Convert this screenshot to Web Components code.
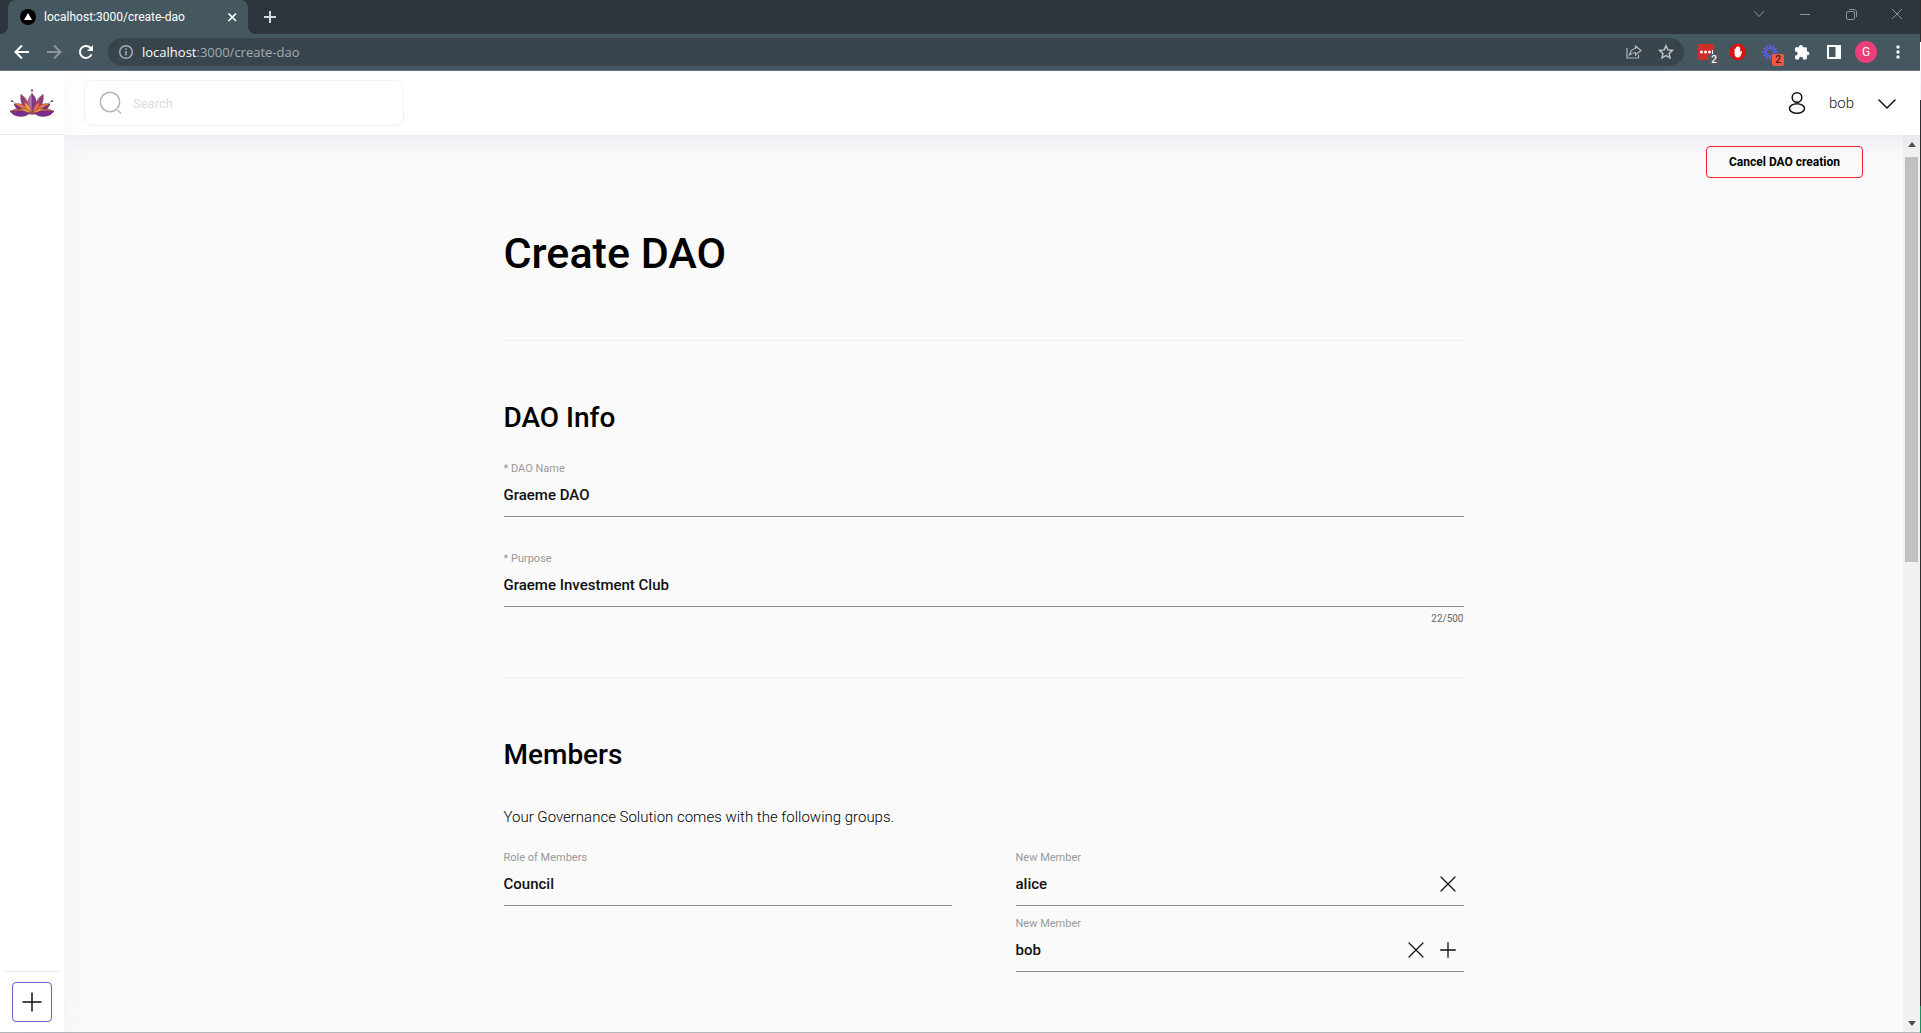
<!DOCTYPE html>
<html lang="en">
<head>
<meta charset="utf-8">
<title>Create DAO</title>
<style>
html,body{height:100%}
body{margin:0;background:#fafafa;color:#000;font-family:Roboto,"Liberation Sans",sans-serif;overflow:hidden}
</style>
</head>
<body>
<browser-window>
  <tab-strip slot="tabs" label="localhost:3000/create-dao"></tab-strip>
  <tool-bar slot="toolbar" host="localhost" path=":3000/create-dao"></tool-bar>
  <dao-app>
    <side-bar slot="side"></side-bar>
    <top-header slot="header" user="bob"></top-header>
    <page-scroller>
      <create-form>
        <form-section heading="DAO Info">
          <text-field label="* DAO Name" value="Graeme DAO"></text-field>
          <text-field label="* Purpose" value="Graeme Investment Club" counter="22/500"></text-field>
        </form-section>
        <form-section heading="Members">
          <member-group note="Your Governance Solution comes with the following groups.">
            <text-field slot="role" label="Role of Members" value="Council"></text-field>
            <text-field label="New Member" value="alice"><icon-button slot="actions" kind="remove"></icon-button></text-field>
            <text-field label="New Member" value="bob"><icon-button slot="actions" kind="remove"></icon-button><icon-button slot="actions" kind="add"></icon-button></text-field>
          </member-group>
        </form-section>
      </create-form>
    </page-scroller>
  </dao-app>
</browser-window>
<script>
const base = `*{box-sizing:border-box}button,input{font:inherit;color:inherit;margin:0;padding:0;border:0;background:none;outline:0}svg{display:block;flex:none}`;
function element(name, render) {
  customElements.define(name, class extends HTMLElement {
    constructor() {
      super();
      this.attachShadow({mode: "open"});
    }
    connectedCallback() {
      const t = document.createElement("template");
      t.innerHTML = `<style>${base}</style>` + render(a => this.getAttribute(a) || "");
      this.shadowRoot.replaceChildren(t.content.cloneNode(true));
    }
  });
}

element("browser-window", () => `
<style>
:host{display:grid;grid-template-columns:minmax(0,1fr) 1px;height:100vh}
.win{display:flex;flex-direction:column;min-height:0;border-bottom:1px solid #b1b7ba}
.page{flex:1;min-height:0;border-top:1px solid #6d7a83}
.edge{display:flex;flex-direction:column;background:#2d2d2d}
.edge i{height:42px}.edge b{height:58px;background:#fff}.edge u{height:27px;margin-top:auto;background:#15925f}
</style>
<div class="win"><slot name="tabs"></slot><slot name="toolbar"></slot><div class="page"><slot></slot></div></div>
<div class="edge"><i></i><b></b><u></u></div>`);

element("tab-strip", a => `
<style>
:host{display:flex;height:34px;padding-left:8px;background:#2c363c;color:#fff}
.tab{position:relative;display:flex;align-items:center;gap:8px;width:240px;padding:0 8px 0 12px;background:#46585f;border-radius:8px 8px 0 0;font-size:12px}
.tab::before,.tab::after{content:"";position:absolute;bottom:0;width:8px;height:8px}
.tab::before{left:-8px;background:radial-gradient(circle at 0 0,transparent 8px,#46585f 8px)}
.tab::after{right:-8px;background:radial-gradient(circle at 100% 0,transparent 8px,#46585f 8px)}
.tab span{flex:1;white-space:nowrap}
.new{display:grid;place-items:center;width:28px;margin-left:8px}
.ctl{display:flex;margin-left:auto;height:28px}
.ctl button{width:46px;display:grid;place-items:center}
</style>
<div class="tab">
<svg width="16" height="16"><circle cx="8" cy="8" r="8"/><path d="M8 4l4 7H4z" fill="#fff"/></svg>
<span>${a("label")}</span>
<button aria-label="Close tab"><svg width="16" height="16" stroke="#fff" stroke-width="1.700"><path d="M4.500 4.500l7.500 7.500M12 4.500l-7.500 7.500"/></svg></button>
</div>
<button class="new" aria-label="New tab"><svg width="14" height="14" stroke="#d4d8da" stroke-width="2"><path d="M7 1v12M1 7h12"/></svg></button>
<div class="ctl">
<button aria-label="Search tabs"><svg width="12" height="12" fill="none" stroke="#8c9498"><path d="M1 3l5 5.500L11 3"/></svg></button>
<button aria-label="Minimize"><svg width="10" height="10" stroke="#8c9498"><path d="M0 5.500h10"/></svg></button>
<button aria-label="Restore"><svg width="11" height="11" fill="none" stroke="#8c9498"><rect x=".5" y="2.500" width="8" height="8" rx="1.500"/><path d="M3 .5h5a2.500 2.500 0 0 1 2.500 2.500v5"/></svg></button>
<button aria-label="Close"><svg width="12" height="12" stroke="#8c9498"><path d="M1 1l10 10M11 1L1 11"/></svg></button>
</div>`);

element("tool-bar", a => `
<style>
:host{display:flex;align-items:center;height:36px;padding:0 6px;background:#46585f;color:#fff;font-family:"Open Sans",sans-serif}
.cell{position:relative;display:grid;place-items:center;width:32px;height:28px;flex:none}
.omni{flex:1;display:flex;align-items:center;height:28px;margin:0 6px;padding:0 2px 0 10px;border-radius:14px;background:#39454c}
.url{flex:1;margin-left:8px;font-size:13px;color:#a6adb1}.url b{font-weight:400;color:#fff}
.badge{position:absolute;left:18px;top:16px;width:12px;height:12px;border-radius:2px;background:#55585c;font:500 10px/12px Roboto,sans-serif;text-align:center}
.badge.o{background:#f9593a;color:#222}
.me{width:22px;height:22px;border-radius:11px;background:#ec407a;font:12px/22px Roboto,sans-serif}
</style>
<button class="cell" aria-label="Back"><svg width="16" height="16" fill="none" stroke="#fff" stroke-width="2"><path d="M15 8H2.500M8 1.500L1.500 8 8 14.500"/></svg></button>
<button class="cell" aria-label="Forward"><svg width="16" height="16" fill="none" stroke="#8b979c" stroke-width="2"><path d="M1 8h12.500M8 1.500L14.500 8 8 14.500"/></svg></button>
<button class="cell" aria-label="Reload"><svg width="16" height="16" fill="none" stroke="#fff" stroke-width="2"><path d="M13.500 10.300A6 6 0 1 1 12.300 3.800L14 5.500"/><path d="M15 1v6H9z" fill="#fff" stroke="none"/></svg></button>
<div class="omni">
<svg width="16" height="16" fill="none" stroke="#a9b0b4" stroke-width="1.500"><circle cx="8" cy="8" r="6.300"/><path d="M8 7v4.500M8 4.300v1.600"/></svg>
<div class="url" role="textbox" aria-label="Address"><b>${a("host")}</b>${a("path")}</div>
<button class="cell" aria-label="Share"><svg width="16" height="16" fill="none" stroke="#b3babd" stroke-width="1.200"><path d="M1 4v10h11.500v-3"/><path d="M9.500 2l5.500 4.500L9.500 11V8.500Q6 8.500 3.500 11 4.500 5 9.500 4.500z"/></svg></button>
<button class="cell" aria-label="Bookmark"><svg width="16" height="16" fill="none" stroke="#c0c6c9" stroke-width="1.500"><path d="M8 1.800l1.900 4.100 4.500.5-3.300 3 .9 4.400L8 11.600l-4 2.200.9-4.400-3.300-3 4.500-.5z"/></svg></button>
</div>
<button class="cell" aria-label="Password manager"><svg width="16" height="16"><rect width="16" height="16" rx="1" fill="#d32d27"/><g fill="#fff"><circle cx="3.500" cy="8" r="1.500"/><circle cx="7.500" cy="8" r="1.500"/><circle cx="11.500" cy="8" r="1.500"/><path d="M14 6h1v4h-1z"/></g></svg><span class="badge">2</span></button>
<button class="cell" aria-label="Ad blocker"><svg width="16" height="16"><path d="M4.700 0h6.600L16 4.700v6.600L11.300 16H4.700L0 11.300V4.700z" fill="#e1120e"/><path d="M4.500 8.500V5q.7-1 1.300 0V3.500q.8-1 1.400 0v-1q.8-1 1.500 0v1q.8-1 1.500 0v4.800l1-1.300q1-.4 1 .5L10.500 12q-1 1.500-2.500 1.500-3.500 0-3.500-5z" fill="#fff"/></svg></button>
<button class="cell" aria-label="Screen recorder"><svg width="16" height="16" viewBox="-8 -8 16 16" stroke="#625df5" stroke-width="1.600"><path d="M0-8v5M0 8V3M-8 0h5M8 0H3M-4-6.900l2.500 4.300M4 6.900L1.500 2.600M4-6.900L1.500-2.600M-4 6.900l2.500-4.300M-6.900-4l4.300 2.500M6.900 4L2.600 1.500M-6.900 4l4.300-2.500M6.900-4L2.600-1.500"/></svg><span class="badge o">2</span></button>
<button class="cell" aria-label="Extensions"><svg width="16" height="16" fill="#fff"><path d="M1 4.500A1.200 1.200 0 0 1 2.200 3.300H5V2.800a1.900 1.900 0 0 1 3.800 0v.5h2.900A1.200 1.200 0 0 1 12.900 4.500v3h.6a1.900 1.900 0 0 1 0 3.800h-.6v2.900a1.200 1.200 0 0 1-1.200 1.200H9V14.800a2 2 0 0 0-4 0v.6H2.200A1.200 1.200 0 0 1 1 14.200V11.400h.6a2 2 0 0 0 0-4H1z"/></svg></button>
<button class="cell" aria-label="Side panel"><svg width="14" height="14"><path d="M0 0h14v14H0zM2 2v10h6.500V2z" fill="#fff" fill-rule="evenodd"/></svg></button>
<button class="cell" aria-label="Profile"><span class="me">G</span></button>
<button class="cell" aria-label="Menu"><svg width="4" height="14" fill="#fff"><circle cx="2" cy="2" r="1.700"/><circle cx="2" cy="7" r="1.700"/><circle cx="2" cy="12" r="1.700"/></svg></button>`);

element("dao-app", () => `
<style>
:host{display:grid;grid-template:64px minmax(0,1fr)/64px minmax(0,1fr);height:100%}
.side{grid-row:1/3;z-index:2;background:#fff;box-shadow:0 0 30px rgba(80,70,170,.05)}
.head{z-index:1;background:#fff;box-shadow:0 0 30px rgba(80,70,170,.13)}
.main{min-height:0}
</style>
<div class="side"><slot name="side"></slot></div><div class="head"><slot name="header"></slot></div><div class="main"><slot></slot></div>`);

element("side-bar", () => `
<style>
:host{display:flex;flex-direction:column;height:100%}
a{display:grid;place-items:center;height:64px;border-bottom:1px solid #ececf0}
.foot{margin:auto 4px 0;padding:10px 8px;border-top:1px solid #ececee}
button{display:grid;place-items:center;width:40px;height:40px;border:1px solid #6f5bcb;border-radius:4px}
</style>
<a href="#" aria-label="Home"><svg width="44" height="28" viewBox="0 0 44 30" preserveAspectRatio="none">
<g stroke="#6a3550" stroke-width=".5" stroke-linejoin="round">
<path d="M11 6Q20 11 21 27 10 20 11 6z" fill="#e9664f"/><path d="M33 6Q24 11 23 27 34 20 33 6z" fill="#e9664f"/>
<path d="M11 6Q9 16 20 25 17 13 11 6z" fill="#8b3f92"/><path d="M33 6Q35 16 24 25 27 13 33 6z" fill="#8b3f92"/>
<path d="M22 5Q30 13 22 27 14 13 22 5z" fill="#b072b4"/><path d="M22 5Q30 13 22 27z" fill="#7d3b94"/>
<path d="M4 16Q15 13 21 27 8 26 4 16z" fill="#f1774c"/><path d="M40 16Q29 13 23 27 36 26 40 16z" fill="#f1774c"/>
<path d="M4 16Q7 25 20 26 12 20 4 16z" fill="#75308a"/><path d="M40 16Q37 25 24 26 32 20 40 16z" fill="#75308a"/>
<path d="M14 14Q21 16 22 27 15 24 14 14z" fill="#f2964f"/><path d="M30 14Q23 16 22 27 29 24 30 14z" fill="#e9664f"/>
<path d="M0 24Q11 18 21 25 15 31 7 29 3 28 0 24z" fill="#7a2b8b"/><path d="M44 24Q33 18 23 25 29 31 37 29 41 28 44 24z" fill="#7a2b8b"/>
<path d="M0 24Q11 18 21 25 10 22 0 24z" fill="#ef694c"/><path d="M44 24Q33 18 23 25 34 22 44 24z" fill="#ef694c"/>
<path d="M9 21Q17 20 22 26 15 25 9 21z" fill="#f5a04f"/><path d="M35 21Q27 20 22 26 29 25 35 21z" fill="#f5a04f"/>
</g>
<g fill="#8d5684"><ellipse cx="22" cy="1.500" rx="1" ry="1.500"/><circle cx="2" cy="13" r="1.200"/><circle cx="42" cy="13" r="1.200"/></g>
<path d="M3 13.500l3 1.500M41 13.500l-3 1.500M22 2v3" stroke="#a88" stroke-width=".6"/></svg></a>
<div class="foot"><button aria-label="New"><svg width="20" height="20" stroke="#111" stroke-width="1.500" stroke-linecap="round"><path d="M10 1v18M1 10h18"/></svg></button></div>`);

element("top-header", a => `
<style>
:host{display:flex;align-items:center;justify-content:space-between;height:100%;padding:0 23px 0 20px}
label{display:flex;align-items:center;gap:10px;width:320px;height:46px;padding:0 14px;border:1px solid #f2f2f4;border-radius:8px}
input{flex:1;min-width:0;font-size:13px}
input::placeholder{color:#dcdcdc;opacity:1}
button{display:flex;align-items:center;gap:23px;font-size:15px;font-weight:300;color:#222}
</style>
<label><svg width="24" height="24" fill="none" stroke="#b5b5b5" stroke-width="1.500"><circle cx="11" cy="11" r="9.700"/><path d="M18.500 19l3.500 3.500"/></svg><input type="search" placeholder="Search" aria-label="Search"></label>
<button aria-haspopup="menu"><svg width="18" height="24" fill="none" stroke="#111" stroke-width="1.500"><circle cx="9" cy="6.500" r="4.800"/><ellipse cx="9" cy="17.500" rx="7.500" ry="4.800"/></svg><span>${a("user")}</span><svg width="20" height="12" fill="none" stroke="#111" stroke-width="1.500" stroke-linecap="round" stroke-linejoin="round"><path d="M2 3l8 8 8-8"/></svg></button>`);

element("page-scroller", () => `
<style>
:host{display:grid;grid-template-columns:minmax(0,1fr) 17px;height:100%}
.view{overflow:hidden}
.bar{display:flex;flex-direction:column;align-items:center;background:#f1f1f1;padding:7px 0 6px}
.track{flex:1;width:13px;margin:10px 0 12px}
.thumb{height:47.5%;background:#c1c1c1}
</style>
<div class="view"><slot></slot></div>
<div class="bar"><svg width="8" height="5" fill="#505050"><path d="M0 5h8L4 0z"/></svg><div class="track"><div class="thumb"></div></div><svg width="8" height="5" fill="#505050"><path d="M0 0h8L4 5z"/></svg></div>`);

element("create-form", () => `
<style>
:host{display:block;padding-top:11px}
.top{display:flex;justify-content:flex-end;padding:0 40px}
.top button{width:157px;height:32px;border:1px solid #f5222d;border-radius:4px;font-size:12px;font-weight:700}
form{max-width:960px;margin:45px auto 0}
h1{margin:0 0 57px;font-size:43px;line-height:60px;font-weight:500}
</style>
<div class="top"><button>Cancel DAO creation</button></div>
<form><h1>Create DAO</h1><slot></slot></form>`);

element("form-section", a => `
<style>
:host{display:block;margin-bottom:50px;padding-top:56px;border-top:1px solid #f0f0f0}
h2{margin:0 0 12px;font-size:28px;line-height:42px;font-weight:500}
.body{display:flex;flex-direction:column;gap:24px}
</style>
<h2>${a("heading")}</h2><div class="body"><slot></slot></div>`);

element("member-group", a => `
<style>
:host{display:block}
p{margin:17px 0 11px;font-size:15px;line-height:24px;font-weight:300}
.cols{display:grid;grid-template-columns:1fr 1fr;gap:64px}
</style>
<p>${a("note")}</p><div class="cols"><div><slot name="role"></slot></div><div><slot></slot></div></div>`);

element("text-field", a => `
<style>
:host{display:block;padding-top:9px}
label{display:block;font-size:11px;line-height:18px;color:#999}
.row{display:flex;align-items:center;height:39px;padding-bottom:4px;border-bottom:1px solid #8c8c8c}
input{flex:1;min-width:0;height:100%;font-size:15px;font-weight:500;color:#111}
.count{margin-top:4px;text-align:right;font-size:10px;line-height:16px;color:#666}
</style>
<label for="f">${a("label")}</label>
<div class="row"><input id="f" value="${a("value")}"><slot name="actions"></slot></div>
${a("counter") ? `<div class="count">${a("counter")}</div>` : ""}`);

element("icon-button", a => `
<style>:host{display:block}button{display:grid;place-items:center;width:32px;height:32px}</style>
<button type="button" aria-label="${a("kind")}"><svg width="16" height="16" stroke="#111" stroke-width="1.300" stroke-linecap="round"><path d="${a("kind") === "add" ? "M8 .7v14.600M.7 8h14.600" : "M1 1l14 14M15 1L1 15"}"/></svg></button>`);
</script>
</body>
</html>
